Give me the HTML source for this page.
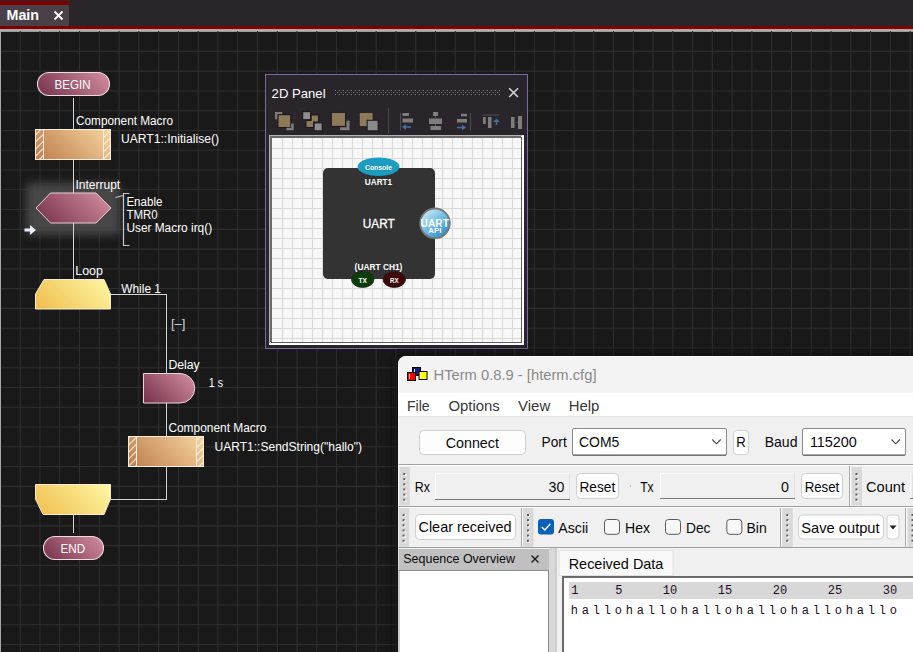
<!DOCTYPE html><html><head><meta charset="utf-8"><style>html,body{margin:0;padding:0;background:#191919;overflow:hidden;width:913px;height:652px}svg{display:block}</style></head><body>
<svg width="913" height="652" viewBox="0 0 913 652" shape-rendering="auto">
<defs>
<linearGradient id="gMar" x1="0" y1="1" x2="1" y2="0">
 <stop offset="0" stop-color="#7a3048"/><stop offset="1" stop-color="#d8a0b0"/></linearGradient>
<linearGradient id="gOr" x1="0" y1="1" x2="1" y2="0">
 <stop offset="0" stop-color="#c0804e"/><stop offset="1" stop-color="#f6d4a0"/></linearGradient>
<linearGradient id="gYe" x1="0" y1="1" x2="1" y2="0">
 <stop offset="0" stop-color="#f0c050"/><stop offset="1" stop-color="#fff8a8"/></linearGradient>
<linearGradient id="gApi" x1="0.1" y1="0.05" x2="0.85" y2="0.95">
 <stop offset="0" stop-color="#d4eef9"/><stop offset="0.45" stop-color="#7cc2e8"/><stop offset="1" stop-color="#2a8acb"/></linearGradient>
<filter id="blur8" x="-50%" y="-50%" width="200%" height="200%"><feGaussianBlur stdDeviation="7"/></filter>
<filter id="blur4" x="-30%" y="-30%" width="160%" height="160%"><feGaussianBlur stdDeviation="4"/></filter>
<filter id="blur3" x="-10%" y="-10%" width="120%" height="120%"><feGaussianBlur stdDeviation="3"/></filter>
<pattern id="hatch" width="5" height="5" patternUnits="userSpaceOnUse" patternTransform="rotate(45)">
 <line x1="0.6" y1="0" x2="0.6" y2="5" stroke="#fff6ea" stroke-width="1.0"/></pattern>
</defs>
<rect x="0" y="0" width="913" height="26" fill="#2a252b"/>
<rect x="0" y="1" width="69" height="4" fill="#800000"/>
<rect x="0" y="5" width="69" height="21" fill="#4a4148"/>
<rect x="0" y="26" width="913" height="3" fill="#800000"/>
<rect x="0" y="29" width="913" height="2" fill="#a8aeb2"/>
<rect x="0" y="31" width="913" height="1" fill="#9e9d96"/>
<text x="6.5" y="20" font-size="14" fill="#fff" font-weight="bold" font-family='"Liberation Sans", sans-serif' text-anchor="start" textLength="32.5" lengthAdjust="spacingAndGlyphs" >Main</text>
<path d="M54.5 11.5 L62.5 19.5 M62.5 11.5 L54.5 19.5" stroke="#fff" stroke-width="1.8"/>
<rect x="1" y="32" width="912" height="620" fill="#191919"/>
<path d="M20.20 31V652 M39.98 31V652 M59.75 31V652 M79.53 31V652 M99.30 31V652 M119.08 31V652 M138.86 31V652 M158.63 31V652 M178.41 31V652 M198.18 31V652 M217.96 31V652 M237.74 31V652 M257.51 31V652 M277.29 31V652 M297.06 31V652 M316.84 31V652 M336.62 31V652 M356.39 31V652 M376.17 31V652 M395.94 31V652 M415.72 31V652 M435.50 31V652 M455.27 31V652 M475.05 31V652 M494.82 31V652 M514.60 31V652 M534.38 31V652 M554.15 31V652 M573.93 31V652 M593.70 31V652 M613.48 31V652 M633.26 31V652 M653.03 31V652 M672.81 31V652 M692.58 31V652 M712.36 31V652 M732.14 31V652 M751.91 31V652 M771.69 31V652 M791.46 31V652 M811.24 31V652 M831.02 31V652 M850.79 31V652 M870.57 31V652 M890.34 31V652 M910.12 31V652 M1 51.40H913 M1 71.17H913 M1 90.94H913 M1 110.71H913 M1 130.48H913 M1 150.25H913 M1 170.02H913 M1 189.79H913 M1 209.56H913 M1 229.33H913 M1 249.10H913 M1 268.87H913 M1 288.64H913 M1 308.41H913 M1 328.18H913 M1 347.95H913 M1 367.72H913 M1 387.49H913 M1 407.26H913 M1 427.03H913 M1 446.80H913 M1 466.57H913 M1 486.34H913 M1 506.11H913 M1 525.88H913 M1 545.65H913 M1 565.42H913 M1 585.19H913 M1 604.96H913 M1 624.73H913 M1 644.50H913" stroke="#2e2e2e" stroke-width="1.1" fill="none"/>
<rect x="0" y="31" width="1" height="621" fill="#a8a8a0"/>
<rect x="26" y="183" width="94" height="52" rx="4" fill="#474747" filter="url(#blur4)"/>
<rect x="73" y="98" width="1" height="31" fill="#d4d4d4"/>
<rect x="73" y="159" width="1" height="34" fill="#d4d4d4"/>
<rect x="73" y="223" width="1" height="56" fill="#d4d4d4"/>
<rect x="111" y="294" width="56" height="1" fill="#d4d4d4"/>
<rect x="166" y="294" width="1" height="79" fill="#d4d4d4"/>
<rect x="166" y="403" width="1" height="33" fill="#d4d4d4"/>
<rect x="166" y="466" width="1" height="34" fill="#d4d4d4"/>
<rect x="111" y="499" width="56" height="1" fill="#d4d4d4"/>
<rect x="73" y="515" width="1" height="18" fill="#d4d4d4"/>
<defs><linearGradient id="g1" gradientUnits="userSpaceOnUse" x1="49.25" y1="108.25" x2="97.75" y2="59.75"><stop offset="0" stop-color="#74304a"/><stop offset="1" stop-color="#d690a2"/></linearGradient></defs>
<rect x="37.5" y="72.5" width="72" height="23" rx="11.5" fill="url(#g1)" stroke="#f0dde4" stroke-width="1.1"/>
<text x="54.5" y="89" font-size="12" fill="#fff" font-weight="normal" font-family='"Liberation Sans", sans-serif' text-anchor="start" textLength="36" lengthAdjust="spacingAndGlyphs" >BEGIN</text>
<defs><linearGradient id="g2" gradientUnits="userSpaceOnUse" x1="52.25" y1="569.25" x2="94.75" y2="526.75"><stop offset="0" stop-color="#74304a"/><stop offset="1" stop-color="#d690a2"/></linearGradient></defs>
<rect x="43.5" y="536.5" width="60" height="23" rx="11.5" fill="url(#g2)" stroke="#f0dde4" stroke-width="1.1"/>
<text x="60.5" y="553" font-size="12" fill="#fff" font-weight="normal" font-family='"Liberation Sans", sans-serif' text-anchor="start" textLength="24.6" lengthAdjust="spacingAndGlyphs" >END</text>
<defs><linearGradient id="g3" gradientUnits="userSpaceOnUse" x1="46.5" y1="170.5" x2="99.5" y2="117.5"><stop offset="0" stop-color="#bd7c4c"/><stop offset="1" stop-color="#f7d6a0"/></linearGradient></defs>
<rect x="35.5" y="129.5" width="75" height="30" fill="url(#g3)" stroke="#fbeee0" stroke-width="1"/>
<rect x="36" y="130" width="7.5" height="29" fill="url(#hatch)"/>
<rect x="103" y="130" width="7.5" height="29" fill="url(#hatch)"/>
<rect x="43" y="130" width="1" height="29" fill="#fbeee0"/>
<rect x="103" y="130" width="1" height="29" fill="#fbeee0"/>
<defs><linearGradient id="g4" gradientUnits="userSpaceOnUse" x1="139.5" y1="477.5" x2="192.5" y2="424.5"><stop offset="0" stop-color="#bd7c4c"/><stop offset="1" stop-color="#f7d6a0"/></linearGradient></defs>
<rect x="128.5" y="436.5" width="75" height="30" fill="url(#g4)" stroke="#fbeee0" stroke-width="1"/>
<rect x="129" y="437" width="7.5" height="29" fill="url(#hatch)"/>
<rect x="196" y="437" width="7.5" height="29" fill="url(#hatch)"/>
<rect x="136" y="437" width="1" height="29" fill="#fbeee0"/>
<rect x="196" y="437" width="1" height="29" fill="#fbeee0"/>
<defs><linearGradient id="g5" gradientUnits="userSpaceOnUse" x1="47.25" y1="234.25" x2="99.75" y2="181.75"><stop offset="0" stop-color="#74304a"/><stop offset="1" stop-color="#d690a2"/></linearGradient></defs>
<polygon points="36,208 50.5,193 96,193 111,208 96,223 50.5,223" fill="url(#g5)" stroke="#e8d0d8" stroke-width="1"/>
<path d="M24.5 228.5 H30 V225 L36 230 L30 235 V231.5 H24.5 Z" fill="#e8f0fa"/>
<path d="M129.5 193.5 H123.5 V245.5 H129.5 M115.5 197.5 L123 195.5" stroke="#c8c8c8" stroke-width="1.2" fill="none"/>
<defs><linearGradient id="g6" gradientUnits="userSpaceOnUse" x1="46.5" y1="320.5" x2="99.5" y2="267.5"><stop offset="0" stop-color="#efbd4c"/><stop offset="1" stop-color="#fff8a6"/></linearGradient></defs>
<polygon points="44,279.5 104,279.5 110.5,294 110.5,309 35.5,309 35.5,294" fill="url(#g6)" stroke="#f4ecd4" stroke-width="1"/>
<defs><linearGradient id="g7" gradientUnits="userSpaceOnUse" x1="46.25" y1="526.25" x2="99.75" y2="472.75"><stop offset="0" stop-color="#efbd4c"/><stop offset="1" stop-color="#fff8a6"/></linearGradient></defs>
<polygon points="35.5,484.5 110.5,484.5 110.5,499 104,514.5 43,514.5 35.5,499" fill="url(#g7)" stroke="#f4ecd4" stroke-width="1"/>
<defs><linearGradient id="g8" gradientUnits="userSpaceOnUse" x1="148.5" y1="408.5" x2="189.5" y2="367.5"><stop offset="0" stop-color="#74304a"/><stop offset="1" stop-color="#d690a2"/></linearGradient></defs>
<path d="M143.5 373.5 H180 A14.75 14.75 0 0 1 180 403 H143.5 Z" fill="url(#g8)" stroke="#ecd6de" stroke-width="1"/>
<text x="76" y="124.9" font-size="12" fill="#fff" font-weight="normal" font-family='"Liberation Sans", sans-serif' text-anchor="start" textLength="97" lengthAdjust="spacingAndGlyphs" >Component Macro</text>
<text x="121" y="143.2" font-size="12" fill="#fff" font-weight="normal" font-family='"Liberation Sans", sans-serif' text-anchor="start" textLength="98" lengthAdjust="spacingAndGlyphs" >UART1::Initialise()</text>
<text x="75.5" y="189" font-size="12" fill="#fff" font-weight="normal" font-family='"Liberation Sans", sans-serif' text-anchor="start" textLength="44.7" lengthAdjust="spacingAndGlyphs" >Interrupt</text>
<text x="126.4" y="205.6" font-size="12" fill="#fff" font-weight="normal" font-family='"Liberation Sans", sans-serif' text-anchor="start" textLength="36" lengthAdjust="spacingAndGlyphs" >Enable</text>
<text x="126.4" y="218.6" font-size="12" fill="#fff" font-weight="normal" font-family='"Liberation Sans", sans-serif' text-anchor="start" textLength="31.2" lengthAdjust="spacingAndGlyphs" >TMR0</text>
<text x="126.4" y="232.4" font-size="12" fill="#fff" font-weight="normal" font-family='"Liberation Sans", sans-serif' text-anchor="start" textLength="85.7" lengthAdjust="spacingAndGlyphs" >User Macro irq()</text>
<text x="75.3" y="275.4" font-size="12" fill="#fff" font-weight="normal" font-family='"Liberation Sans", sans-serif' text-anchor="start" textLength="27.6" lengthAdjust="spacingAndGlyphs" >Loop</text>
<text x="121.2" y="293" font-size="12" fill="#fff" font-weight="normal" font-family='"Liberation Sans", sans-serif' text-anchor="start" textLength="39.8" lengthAdjust="spacingAndGlyphs" >While 1</text>
<text x="171" y="327.8" font-size="13" fill="#d0d0d0" font-weight="normal" font-family='"Liberation Sans", sans-serif' text-anchor="start" textLength="14.5" lengthAdjust="spacingAndGlyphs" >[–]</text>
<text x="168.4" y="369" font-size="12" fill="#fff" font-weight="normal" font-family='"Liberation Sans", sans-serif' text-anchor="start" textLength="31.3" lengthAdjust="spacingAndGlyphs" >Delay</text>
<text x="208.8" y="387" font-size="12" fill="#fff" font-weight="normal" font-family='"Liberation Sans", sans-serif' text-anchor="start" textLength="14.2" lengthAdjust="spacingAndGlyphs" >1 s</text>
<text x="168.4" y="432" font-size="12" fill="#fff" font-weight="normal" font-family='"Liberation Sans", sans-serif' text-anchor="start" textLength="98" lengthAdjust="spacingAndGlyphs" >Component Macro</text>
<text x="214.5" y="451" font-size="12" fill="#fff" font-weight="normal" font-family='"Liberation Sans", sans-serif' text-anchor="start" textLength="147.5" lengthAdjust="spacingAndGlyphs" >UART1::SendString("hallo")</text>
<rect x="265.5" y="74.5" width="262" height="274" fill="#2a252a" stroke="#7b69a6" stroke-width="1"/>
<text x="271.6" y="98" font-size="13" fill="#fff" font-weight="normal" font-family='"Liberation Sans", sans-serif' text-anchor="start" textLength="54" lengthAdjust="spacingAndGlyphs" >2D Panel</text>
<path d="M335 90h1v1h-1z M335 94h1v1h-1z M337 92h1v1h-1z M339 90h1v1h-1z M339 94h1v1h-1z M341 92h1v1h-1z M343 90h1v1h-1z M343 94h1v1h-1z M345 92h1v1h-1z M347 90h1v1h-1z M347 94h1v1h-1z M349 92h1v1h-1z M351 90h1v1h-1z M351 94h1v1h-1z M353 92h1v1h-1z M355 90h1v1h-1z M355 94h1v1h-1z M357 92h1v1h-1z M359 90h1v1h-1z M359 94h1v1h-1z M361 92h1v1h-1z M363 90h1v1h-1z M363 94h1v1h-1z M365 92h1v1h-1z M367 90h1v1h-1z M367 94h1v1h-1z M369 92h1v1h-1z M371 90h1v1h-1z M371 94h1v1h-1z M373 92h1v1h-1z M375 90h1v1h-1z M375 94h1v1h-1z M377 92h1v1h-1z M379 90h1v1h-1z M379 94h1v1h-1z M381 92h1v1h-1z M383 90h1v1h-1z M383 94h1v1h-1z M385 92h1v1h-1z M387 90h1v1h-1z M387 94h1v1h-1z M389 92h1v1h-1z M391 90h1v1h-1z M391 94h1v1h-1z M393 92h1v1h-1z M395 90h1v1h-1z M395 94h1v1h-1z M397 92h1v1h-1z M399 90h1v1h-1z M399 94h1v1h-1z M401 92h1v1h-1z M403 90h1v1h-1z M403 94h1v1h-1z M405 92h1v1h-1z M407 90h1v1h-1z M407 94h1v1h-1z M409 92h1v1h-1z M411 90h1v1h-1z M411 94h1v1h-1z M413 92h1v1h-1z M415 90h1v1h-1z M415 94h1v1h-1z M417 92h1v1h-1z M419 90h1v1h-1z M419 94h1v1h-1z M421 92h1v1h-1z M423 90h1v1h-1z M423 94h1v1h-1z M425 92h1v1h-1z M427 90h1v1h-1z M427 94h1v1h-1z M429 92h1v1h-1z M431 90h1v1h-1z M431 94h1v1h-1z M433 92h1v1h-1z M435 90h1v1h-1z M435 94h1v1h-1z M437 92h1v1h-1z M439 90h1v1h-1z M439 94h1v1h-1z M441 92h1v1h-1z M443 90h1v1h-1z M443 94h1v1h-1z M445 92h1v1h-1z M447 90h1v1h-1z M447 94h1v1h-1z M449 92h1v1h-1z M451 90h1v1h-1z M451 94h1v1h-1z M453 92h1v1h-1z M455 90h1v1h-1z M455 94h1v1h-1z M457 92h1v1h-1z M459 90h1v1h-1z M459 94h1v1h-1z M461 92h1v1h-1z M463 90h1v1h-1z M463 94h1v1h-1z M465 92h1v1h-1z M467 90h1v1h-1z M467 94h1v1h-1z M469 92h1v1h-1z M471 90h1v1h-1z M471 94h1v1h-1z M473 92h1v1h-1z M475 90h1v1h-1z M475 94h1v1h-1z M477 92h1v1h-1z M479 90h1v1h-1z M479 94h1v1h-1z M481 92h1v1h-1z M483 90h1v1h-1z M483 94h1v1h-1z M485 92h1v1h-1z M487 90h1v1h-1z M487 94h1v1h-1z M489 92h1v1h-1z M491 90h1v1h-1z M491 94h1v1h-1z M493 92h1v1h-1z M495 90h1v1h-1z M495 94h1v1h-1z M497 92h1v1h-1z M499 90h1v1h-1z M499 94h1v1h-1z" fill="#8e8e8e"/>
<path d="M509.2 88.2 L518 97 M518 88.2 L509.2 97" stroke="#d4d4d4" stroke-width="1.6"/>
<path d="M275 112h7.2v2.6h-4.6v4.6h-2.6z" fill="#7c7c7c"/>
<rect x="277.5" y="114.2" width="13.7" height="13.8" fill="#1c181c"/>
<rect x="278.5" y="115.2" width="11.7" height="11.8" fill="#8c7a58"/>
<path d="M291.1 123.4h2.6v6.9h-7.3v-2.6h4.7z" fill="#7c7c7c"/>
<rect x="302.2" y="111.2" width="8.8" height="8.9" fill="#1c181c"/>
<rect x="303.2" y="112.2" width="6.8" height="6.9" fill="#8e8e8e"/>
<path d="M310.7 114.5h8.3v8h-5v5.5h-8.5v-8h5.2z" fill="#1c181c"/>
<path d="M311.7 115.5h6.3v6h-5v5.5h-6.5v-6h5.2z" fill="#8c7a58"/>
<rect x="313.7" y="122.4" width="8.9" height="8.9" fill="#1c181c"/>
<rect x="314.7" y="123.4" width="6.9" height="6.9" fill="#8e8e8e"/>
<path d="M294.5 112v7" stroke="#3c383d" stroke-width="1" stroke-dasharray="1 1"/>
<rect x="330.9" y="111.9" width="15.1" height="15" fill="#1c181c"/>
<rect x="331.9" y="112.9" width="13.1" height="13" fill="#8c7a58"/>
<path d="M346.5 120.8h3.1v9.5h-9.5v-3.1h6.4z" fill="#7c7c7c"/>
<path d="M359.8 113h12.8v7.8h-5v5.2h-7.8z" fill="#8c7a58"/>
<rect x="366.7" y="119.8" width="11.9" height="11.5" fill="#1c181c"/>
<rect x="367.7" y="120.8" width="9.9" height="9.5" fill="#8a8a8a"/>
<rect x="388" y="108" width="1" height="26" fill="#4a4a4a"/>
<rect x="400" y="113" width="1" height="17.5" fill="#4e4e4e"/>
<rect x="402.5" y="113" width="6.5" height="3" fill="#7e7e7e"/>
<rect x="402.5" y="118.5" width="10.5" height="4" fill="#7e7e7e"/>
<path d="M402 127 L406 124 V126.3 H411 V127.7 H406 V130 Z" fill="#41709f"/>
<rect x="433" y="112" width="5" height="4" fill="#7e7e7e"/>
<rect x="429" y="118.5" width="13" height="5.5" fill="#7e7e7e"/>
<rect x="430.5" y="126" width="10.5" height="4" fill="#7e7e7e"/>
<rect x="435" y="116" width="1" height="2.5" fill="#5a5a5a"/>
<rect x="435" y="124" width="1" height="2" fill="#5a5a5a"/>
<rect x="461" y="113.8" width="6" height="2.5" fill="#7e7e7e"/>
<rect x="457" y="119" width="10" height="3.5" fill="#7e7e7e"/>
<rect x="470" y="113" width="1" height="17" fill="#4e4e4e"/>
<path d="M466 127.5 L462 124.5 V126.8 H457 V128.2 H462 V130.5 Z" fill="#41709f"/>
<rect x="482" y="114.5" width="17.5" height="1" fill="#4e4e4e"/>
<rect x="483" y="117" width="2.7" height="7" fill="#7e7e7e"/>
<rect x="488" y="117" width="3.5" height="11" fill="#7e7e7e"/>
<path d="M496.5 118.5 L500 122 H497.3 V125 H495.7 V122 H493 Z" fill="#41709f"/>
<rect x="511" y="117" width="3.5" height="11" fill="#7e7e7e"/>
<rect x="518" y="116" width="4" height="13" fill="#7e7e7e"/>
<rect x="514.5" y="122" width="3.5" height="1" fill="#444"/>
<rect x="269" y="135" width="255" height="210" fill="#ffffff"/>
<rect x="269" y="135" width="253" height="1" fill="#b4b4b4"/>
<rect x="269" y="135" width="1" height="208" fill="#b4b4b4"/>
<rect x="270" y="136" width="251" height="2" fill="#6a6a6a"/>
<rect x="270" y="136" width="2" height="206" fill="#6a6a6a"/>
<rect x="272" y="138" width="249" height="204" fill="#f7f7f7"/>
<rect x="521" y="137" width="1" height="206" fill="#606060"/>
<rect x="271" y="342" width="251" height="1" fill="#606060"/>
<path d="M282.5 138V342 M292.5 138V342 M302.5 138V342 M312.5 138V342 M322.5 138V342 M332.5 138V342 M342.5 138V342 M352.5 138V342 M362.5 138V342 M372.5 138V342 M382.5 138V342 M392.5 138V342 M402.5 138V342 M412.5 138V342 M422.5 138V342 M432.5 138V342 M442.5 138V342 M452.5 138V342 M462.5 138V342 M472.5 138V342 M482.5 138V342 M492.5 138V342 M502.5 138V342 M512.5 138V342 M272 148.5H521 M272 158.5H521 M272 168.5H521 M272 178.5H521 M272 188.5H521 M272 198.5H521 M272 208.5H521 M272 218.5H521 M272 228.5H521 M272 238.5H521 M272 248.5H521 M272 258.5H521 M272 268.5H521 M272 278.5H521 M272 288.5H521 M272 298.5H521 M272 308.5H521 M272 318.5H521 M272 328.5H521 M272 338.5H521" stroke="#d9d9d9" stroke-width="1.1" fill="none"/>
<rect x="323" y="168" width="112" height="111" rx="5" fill="#333333"/>
<ellipse cx="378.5" cy="166.8" rx="21" ry="9.2" fill="#1b9cc0"/>
<text x="378.5" y="170.3" font-size="8" fill="#fff" font-weight="bold" font-family='"Liberation Sans", sans-serif' text-anchor="middle" textLength="27" lengthAdjust="spacingAndGlyphs" >Console</text>
<text x="378.5" y="185.2" font-size="9" fill="#fff" font-weight="bold" font-family='"Liberation Sans", sans-serif' text-anchor="middle" textLength="27.3" lengthAdjust="spacingAndGlyphs" >UART1</text>
<text x="378.7" y="228.3" font-size="12.5" fill="#fff" font-weight="normal" font-family='"Liberation Sans", sans-serif' text-anchor="middle" textLength="31.9" lengthAdjust="spacingAndGlyphs" stroke="#ffffff" stroke-width="0.3">UART</text>
<circle cx="435" cy="223.3" r="14.8" fill="url(#gApi)" stroke="#777777" stroke-width="1.8"/>
<text x="434.8" y="226.8" font-size="10" fill="#fff" font-weight="bold" font-family='"Liberation Sans", sans-serif' text-anchor="middle" textLength="28.5" lengthAdjust="spacingAndGlyphs" >UART</text>
<text x="434.8" y="233" font-size="7" fill="#fff" font-weight="bold" font-family='"Liberation Sans", sans-serif' text-anchor="middle" textLength="13" lengthAdjust="spacingAndGlyphs" >API</text>
<text x="378.5" y="269.9" font-size="9" fill="#fff" font-weight="bold" font-family='"Liberation Sans", sans-serif' text-anchor="middle" textLength="47.8" lengthAdjust="spacingAndGlyphs" >(UART CH1)</text>
<ellipse cx="362.7" cy="279.5" rx="11.2" ry="8" fill="#0a3c0a" stroke="#1e2a1e" stroke-width="0.8"/>
<ellipse cx="394.3" cy="279.5" rx="11.2" ry="8" fill="#3c0909" stroke="#2a1e1e" stroke-width="0.8"/>
<text x="362.7" y="283" font-size="7" fill="#fff" font-weight="bold" font-family='"Liberation Sans", sans-serif' text-anchor="middle" textLength="8.5" lengthAdjust="spacingAndGlyphs" >TX</text>
<text x="394.3" y="283" font-size="7" fill="#fff" font-weight="bold" font-family='"Liberation Sans", sans-serif' text-anchor="middle" textLength="8.5" lengthAdjust="spacingAndGlyphs" >RX</text>
<rect x="392" y="350" width="540" height="320" rx="12" fill="#101010" opacity="0.5" filter="url(#blur3)"/>
<path d="M398 652 V364 A8 8 0 0 1 406 356 H913 V652 Z" fill="#f3f3f3"/>
<path d="M398.5 652 V364 A7.5 7.5 0 0 1 406 356.5 H913" stroke="#fdfdfd" stroke-width="1" fill="none"/>
<rect x="398.5" y="392.8" width="514.5" height="23.2" fill="#ffffff"/>
<rect x="398.5" y="416" width="514.5" height="1.5" fill="#e6e6e6"/>
<rect x="398.5" y="417.5" width="514.5" height="47" fill="#f0f0f0"/>
<rect x="412.5" y="367.5" width="8" height="8" fill="#1c1c86" stroke="#000" stroke-width="1"/>
<rect x="414" y="369" width="1" height="5" fill="#fff" opacity="0.85"/>
<rect x="407.5" y="372.5" width="8" height="8" fill="#ff0000" stroke="#000" stroke-width="1"/>
<rect x="409" y="374" width="1" height="5" fill="#fff" opacity="0.85"/>
<rect x="419.0" y="371.5" width="8" height="8" fill="#ffff00" stroke="#000" stroke-width="1"/>
<rect x="420.5" y="373" width="1" height="5" fill="#fff" opacity="0.85"/>
<text x="433.5" y="379.6" font-size="14" fill="#8a8a8a" font-weight="normal" font-family='"Liberation Sans", sans-serif' text-anchor="start" textLength="163" lengthAdjust="spacingAndGlyphs" >HTerm 0.8.9 - [hterm.cfg]</text>
<text x="407" y="410.8" font-size="14" fill="#383838" font-weight="normal" font-family='"Liberation Sans", sans-serif' text-anchor="start" textLength="22.7" lengthAdjust="spacingAndGlyphs" >File</text>
<text x="448.5" y="410.8" font-size="14" fill="#383838" font-weight="normal" font-family='"Liberation Sans", sans-serif' text-anchor="start" textLength="51.3" lengthAdjust="spacingAndGlyphs" >Options</text>
<text x="518" y="410.8" font-size="14" fill="#383838" font-weight="normal" font-family='"Liberation Sans", sans-serif' text-anchor="start" textLength="32.2" lengthAdjust="spacingAndGlyphs" >View</text>
<text x="568.7" y="410.8" font-size="14" fill="#383838" font-weight="normal" font-family='"Liberation Sans", sans-serif' text-anchor="start" textLength="30.7" lengthAdjust="spacingAndGlyphs" >Help</text>
<rect x="419.5" y="430.5" width="106" height="24" rx="4" fill="#fdfdfd" stroke="#d0d0d0" stroke-width="1"/>
<text x="445.7" y="448.3" font-size="14" fill="#0a0a0a" font-weight="normal" font-family='"Liberation Sans", sans-serif' text-anchor="start" textLength="53.2" lengthAdjust="spacingAndGlyphs" >Connect</text>
<text x="541.6" y="446.9" font-size="15" fill="#0a0a0a" font-weight="normal" font-family='"Liberation Sans", sans-serif' text-anchor="start" textLength="25.1" lengthAdjust="spacingAndGlyphs" >Port</text>
<rect x="572.5" y="428.5" width="154" height="27" rx="1.5" fill="#ffffff" stroke="#8a8a8a" stroke-width="1"/>
<rect x="573" y="454.5" width="153" height="1" fill="#5a5a5a"/>
<text x="579" y="446.9" font-size="15" fill="#0a0a0a" font-weight="normal" font-family='"Liberation Sans", sans-serif' text-anchor="start" textLength="40.3" lengthAdjust="spacingAndGlyphs" >COM5</text>
<path d="M712.3 439.5 L716.5 443.8 L720.7 439.5" stroke="#404040" stroke-width="1.1" fill="none"/>
<rect x="733.5" y="430.5" width="15" height="24" rx="3" fill="#fdfdfd" stroke="#d0d0d0" stroke-width="1"/>
<text x="741" y="447" font-size="15" fill="#0a0a0a" font-weight="normal" font-family='"Liberation Sans", sans-serif' text-anchor="middle" textLength="9.5" lengthAdjust="spacingAndGlyphs" >R</text>
<text x="764.7" y="446.9" font-size="15" fill="#0a0a0a" font-weight="normal" font-family='"Liberation Sans", sans-serif' text-anchor="start" textLength="32.8" lengthAdjust="spacingAndGlyphs" >Baud</text>
<rect x="802.5" y="428.5" width="103" height="27" rx="1.5" fill="#ffffff" stroke="#8a8a8a" stroke-width="1"/>
<rect x="803" y="454.5" width="102" height="1" fill="#5a5a5a"/>
<text x="809.9" y="446.9" font-size="15" fill="#0a0a0a" font-weight="normal" font-family='"Liberation Sans", sans-serif' text-anchor="start" textLength="47" lengthAdjust="spacingAndGlyphs" >115200</text>
<path d="M891.5 439.5 L895.7 443.8 L899.9 439.5" stroke="#404040" stroke-width="1.1" fill="none"/>
<rect x="398.5" y="464" width="514.5" height="1" fill="#a0a0a0"/>
<rect x="398.5" y="465" width="514.5" height="1" fill="#ffffff"/>
<rect x="398.5" y="466" width="514.5" height="40" fill="#f0f0f0"/>
<rect x="399.3" y="467" width="10.5" height="38.5" fill="#d9d9d9"/>
<rect x="403.3" y="473" width="2" height="2" fill="#5a5a5a"/>
<rect x="404.3" y="475" width="2" height="1" fill="#ffffff"/>
<rect x="405.3" y="474" width="1" height="1" fill="#ffffff"/>
<rect x="403.3" y="478.15" width="2" height="2" fill="#5a5a5a"/>
<rect x="404.3" y="480.15" width="2" height="1" fill="#ffffff"/>
<rect x="405.3" y="479.15" width="1" height="1" fill="#ffffff"/>
<rect x="403.3" y="483.29999999999995" width="2" height="2" fill="#5a5a5a"/>
<rect x="404.3" y="485.29999999999995" width="2" height="1" fill="#ffffff"/>
<rect x="405.3" y="484.29999999999995" width="1" height="1" fill="#ffffff"/>
<rect x="403.3" y="488.44999999999993" width="2" height="2" fill="#5a5a5a"/>
<rect x="404.3" y="490.44999999999993" width="2" height="1" fill="#ffffff"/>
<rect x="405.3" y="489.44999999999993" width="1" height="1" fill="#ffffff"/>
<rect x="403.3" y="493.5999999999999" width="2" height="2" fill="#5a5a5a"/>
<rect x="404.3" y="495.5999999999999" width="2" height="1" fill="#ffffff"/>
<rect x="405.3" y="494.5999999999999" width="1" height="1" fill="#ffffff"/>
<rect x="403.3" y="498.7499999999999" width="2" height="2" fill="#5a5a5a"/>
<rect x="404.3" y="500.7499999999999" width="2" height="1" fill="#ffffff"/>
<rect x="405.3" y="499.7499999999999" width="1" height="1" fill="#ffffff"/>
<text x="414.8" y="491.9" font-size="15" fill="#0a0a0a" font-weight="normal" font-family='"Liberation Sans", sans-serif' text-anchor="start" textLength="15.2" lengthAdjust="spacingAndGlyphs" >Rx</text>
<rect x="435" y="473" width="135" height="27" fill="#f0f0f0"/>
<rect x="435" y="473" width="135" height="1" fill="#fbfbfb"/>
<rect x="435" y="473" width="1" height="27" fill="#fbfbfb"/>
<rect x="569" y="473" width="1" height="27" fill="#e2e2e2"/>
<rect x="435" y="499" width="135" height="1" fill="#7a7a7a"/>
<text x="548.5" y="491.9" font-size="15" fill="#0a0a0a" font-weight="normal" font-family='"Liberation Sans", sans-serif' text-anchor="start" textLength="15.8" lengthAdjust="spacingAndGlyphs" >30</text>
<rect x="576.5" y="473.5" width="42" height="25" rx="4" fill="#fdfdfd" stroke="#d0d0d0" stroke-width="1"/>
<text x="579.4" y="491.9" font-size="15" fill="#0a0a0a" font-weight="normal" font-family='"Liberation Sans", sans-serif' text-anchor="start" textLength="35.8" lengthAdjust="spacingAndGlyphs" >Reset</text>
<rect x="630" y="485.5" width="1" height="1" fill="#909090"/>
<text x="640.2" y="491.9" font-size="15" fill="#0a0a0a" font-weight="normal" font-family='"Liberation Sans", sans-serif' text-anchor="start" textLength="13.5" lengthAdjust="spacingAndGlyphs" >Tx</text>
<rect x="660" y="473" width="135" height="26" fill="#f0f0f0"/>
<rect x="660" y="473" width="135" height="1" fill="#fbfbfb"/>
<rect x="660" y="473" width="1" height="26" fill="#fbfbfb"/>
<rect x="794" y="473" width="1" height="26" fill="#e2e2e2"/>
<rect x="660" y="498" width="135" height="1" fill="#7a7a7a"/>
<text x="781" y="491.9" font-size="15" fill="#0a0a0a" font-weight="normal" font-family='"Liberation Sans", sans-serif' text-anchor="start" textLength="7.9" lengthAdjust="spacingAndGlyphs" >0</text>
<rect x="801.5" y="473.5" width="41" height="25" rx="4" fill="#fdfdfd" stroke="#d0d0d0" stroke-width="1"/>
<text x="804.7" y="491.9" font-size="15" fill="#0a0a0a" font-weight="normal" font-family='"Liberation Sans", sans-serif' text-anchor="start" textLength="34.6" lengthAdjust="spacingAndGlyphs" >Reset</text>
<rect x="849" y="466" width="1" height="40" fill="#a8a8a8"/>
<rect x="850" y="466" width="1" height="40" fill="#ffffff"/>
<rect x="851.5" y="467" width="10.5" height="38.5" fill="#d9d9d9"/>
<rect x="855.5" y="473" width="2" height="2" fill="#5a5a5a"/>
<rect x="856.5" y="475" width="2" height="1" fill="#ffffff"/>
<rect x="857.5" y="474" width="1" height="1" fill="#ffffff"/>
<rect x="855.5" y="478.15" width="2" height="2" fill="#5a5a5a"/>
<rect x="856.5" y="480.15" width="2" height="1" fill="#ffffff"/>
<rect x="857.5" y="479.15" width="1" height="1" fill="#ffffff"/>
<rect x="855.5" y="483.29999999999995" width="2" height="2" fill="#5a5a5a"/>
<rect x="856.5" y="485.29999999999995" width="2" height="1" fill="#ffffff"/>
<rect x="857.5" y="484.29999999999995" width="1" height="1" fill="#ffffff"/>
<rect x="855.5" y="488.44999999999993" width="2" height="2" fill="#5a5a5a"/>
<rect x="856.5" y="490.44999999999993" width="2" height="1" fill="#ffffff"/>
<rect x="857.5" y="489.44999999999993" width="1" height="1" fill="#ffffff"/>
<rect x="855.5" y="493.5999999999999" width="2" height="2" fill="#5a5a5a"/>
<rect x="856.5" y="495.5999999999999" width="2" height="1" fill="#ffffff"/>
<rect x="857.5" y="494.5999999999999" width="1" height="1" fill="#ffffff"/>
<rect x="855.5" y="498.7499999999999" width="2" height="2" fill="#5a5a5a"/>
<rect x="856.5" y="500.7499999999999" width="2" height="1" fill="#ffffff"/>
<rect x="857.5" y="499.7499999999999" width="1" height="1" fill="#ffffff"/>
<text x="866" y="491.9" font-size="15" fill="#0a0a0a" font-weight="normal" font-family='"Liberation Sans", sans-serif' text-anchor="start" textLength="39" lengthAdjust="spacingAndGlyphs" >Count</text>
<rect x="910" y="473" width="3" height="26" fill="#f0f0f0"/>
<rect x="910" y="473" width="3" height="1" fill="#fbfbfb"/>
<rect x="910" y="473" width="1" height="26" fill="#fbfbfb"/>
<rect x="912" y="473" width="1" height="26" fill="#e2e2e2"/>
<rect x="910" y="498" width="3" height="1" fill="#7a7a7a"/>
<rect x="398.5" y="506" width="514.5" height="1" fill="#a0a0a0"/>
<rect x="398.5" y="507" width="514.5" height="1" fill="#ffffff"/>
<rect x="398.5" y="508" width="514.5" height="39" fill="#f0f0f0"/>
<rect x="398.6" y="508" width="10.5" height="39" fill="#d9d9d9"/>
<rect x="402.6" y="514" width="2" height="2" fill="#5a5a5a"/>
<rect x="403.6" y="516" width="2" height="1" fill="#ffffff"/>
<rect x="404.6" y="515" width="1" height="1" fill="#ffffff"/>
<rect x="402.6" y="519.15" width="2" height="2" fill="#5a5a5a"/>
<rect x="403.6" y="521.15" width="2" height="1" fill="#ffffff"/>
<rect x="404.6" y="520.15" width="1" height="1" fill="#ffffff"/>
<rect x="402.6" y="524.3" width="2" height="2" fill="#5a5a5a"/>
<rect x="403.6" y="526.3" width="2" height="1" fill="#ffffff"/>
<rect x="404.6" y="525.3" width="1" height="1" fill="#ffffff"/>
<rect x="402.6" y="529.4499999999999" width="2" height="2" fill="#5a5a5a"/>
<rect x="403.6" y="531.4499999999999" width="2" height="1" fill="#ffffff"/>
<rect x="404.6" y="530.4499999999999" width="1" height="1" fill="#ffffff"/>
<rect x="402.6" y="534.5999999999999" width="2" height="2" fill="#5a5a5a"/>
<rect x="403.6" y="536.5999999999999" width="2" height="1" fill="#ffffff"/>
<rect x="404.6" y="535.5999999999999" width="1" height="1" fill="#ffffff"/>
<rect x="402.6" y="539.7499999999999" width="2" height="2" fill="#5a5a5a"/>
<rect x="403.6" y="541.7499999999999" width="2" height="1" fill="#ffffff"/>
<rect x="404.6" y="540.7499999999999" width="1" height="1" fill="#ffffff"/>
<rect x="415.5" y="514.5" width="100" height="25" rx="4" fill="#fdfdfd" stroke="#d0d0d0" stroke-width="1"/>
<text x="418.5" y="532.4" font-size="15" fill="#0a0a0a" font-weight="normal" font-family='"Liberation Sans", sans-serif' text-anchor="start" textLength="93" lengthAdjust="spacingAndGlyphs" >Clear received</text>
<rect x="521" y="508" width="1" height="39" fill="#a8a8a8"/>
<rect x="522" y="508" width="1" height="39" fill="#ffffff"/>
<rect x="523" y="508" width="10.5" height="39" fill="#d9d9d9"/>
<rect x="527" y="514" width="2" height="2" fill="#5a5a5a"/>
<rect x="528" y="516" width="2" height="1" fill="#ffffff"/>
<rect x="529" y="515" width="1" height="1" fill="#ffffff"/>
<rect x="527" y="519.15" width="2" height="2" fill="#5a5a5a"/>
<rect x="528" y="521.15" width="2" height="1" fill="#ffffff"/>
<rect x="529" y="520.15" width="1" height="1" fill="#ffffff"/>
<rect x="527" y="524.3" width="2" height="2" fill="#5a5a5a"/>
<rect x="528" y="526.3" width="2" height="1" fill="#ffffff"/>
<rect x="529" y="525.3" width="1" height="1" fill="#ffffff"/>
<rect x="527" y="529.4499999999999" width="2" height="2" fill="#5a5a5a"/>
<rect x="528" y="531.4499999999999" width="2" height="1" fill="#ffffff"/>
<rect x="529" y="530.4499999999999" width="1" height="1" fill="#ffffff"/>
<rect x="527" y="534.5999999999999" width="2" height="2" fill="#5a5a5a"/>
<rect x="528" y="536.5999999999999" width="2" height="1" fill="#ffffff"/>
<rect x="529" y="535.5999999999999" width="1" height="1" fill="#ffffff"/>
<rect x="527" y="539.7499999999999" width="2" height="2" fill="#5a5a5a"/>
<rect x="528" y="541.7499999999999" width="2" height="1" fill="#ffffff"/>
<rect x="529" y="540.7499999999999" width="1" height="1" fill="#ffffff"/>
<rect x="538" y="519" width="16" height="15.5" rx="3" fill="#0a5fbf"/>
<path d="M541.8 527 L544.8 530 L550.4 523.8" stroke="#ffffff" stroke-width="1.3" fill="none"/>
<text x="558.3" y="533" font-size="15" fill="#0a0a0a" font-weight="normal" font-family='"Liberation Sans", sans-serif' text-anchor="start" textLength="29.9" lengthAdjust="spacingAndGlyphs" >Ascii</text>
<rect x="604.5" y="519.5" width="15" height="14.8" rx="3" fill="#f8f8f8" stroke="#585858" stroke-width="1"/>
<text x="625" y="533" font-size="15" fill="#0a0a0a" font-weight="normal" font-family='"Liberation Sans", sans-serif' text-anchor="start" textLength="25" lengthAdjust="spacingAndGlyphs" >Hex</text>
<rect x="665.5" y="519.5" width="15" height="14.8" rx="3" fill="#f8f8f8" stroke="#585858" stroke-width="1"/>
<text x="686" y="533" font-size="15" fill="#0a0a0a" font-weight="normal" font-family='"Liberation Sans", sans-serif' text-anchor="start" textLength="24.5" lengthAdjust="spacingAndGlyphs" >Dec</text>
<rect x="726.8" y="519.5" width="15" height="14.8" rx="3" fill="#f8f8f8" stroke="#585858" stroke-width="1"/>
<text x="746.5" y="533" font-size="15" fill="#0a0a0a" font-weight="normal" font-family='"Liberation Sans", sans-serif' text-anchor="start" textLength="20.2" lengthAdjust="spacingAndGlyphs" >Bin</text>
<rect x="780" y="508" width="1" height="39" fill="#a8a8a8"/>
<rect x="781" y="508" width="1" height="39" fill="#ffffff"/>
<rect x="782.3" y="508" width="10.5" height="39" fill="#d9d9d9"/>
<rect x="786.3" y="514" width="2" height="2" fill="#5a5a5a"/>
<rect x="787.3" y="516" width="2" height="1" fill="#ffffff"/>
<rect x="788.3" y="515" width="1" height="1" fill="#ffffff"/>
<rect x="786.3" y="519.15" width="2" height="2" fill="#5a5a5a"/>
<rect x="787.3" y="521.15" width="2" height="1" fill="#ffffff"/>
<rect x="788.3" y="520.15" width="1" height="1" fill="#ffffff"/>
<rect x="786.3" y="524.3" width="2" height="2" fill="#5a5a5a"/>
<rect x="787.3" y="526.3" width="2" height="1" fill="#ffffff"/>
<rect x="788.3" y="525.3" width="1" height="1" fill="#ffffff"/>
<rect x="786.3" y="529.4499999999999" width="2" height="2" fill="#5a5a5a"/>
<rect x="787.3" y="531.4499999999999" width="2" height="1" fill="#ffffff"/>
<rect x="788.3" y="530.4499999999999" width="1" height="1" fill="#ffffff"/>
<rect x="786.3" y="534.5999999999999" width="2" height="2" fill="#5a5a5a"/>
<rect x="787.3" y="536.5999999999999" width="2" height="1" fill="#ffffff"/>
<rect x="788.3" y="535.5999999999999" width="1" height="1" fill="#ffffff"/>
<rect x="786.3" y="539.7499999999999" width="2" height="2" fill="#5a5a5a"/>
<rect x="787.3" y="541.7499999999999" width="2" height="1" fill="#ffffff"/>
<rect x="788.3" y="540.7499999999999" width="1" height="1" fill="#ffffff"/>
<rect x="798.5" y="515.0" width="85" height="24.0" rx="4" fill="#fdfdfd" stroke="#d0d0d0" stroke-width="1"/>
<text x="801.3" y="533" font-size="15" fill="#0a0a0a" font-weight="normal" font-family='"Liberation Sans", sans-serif' text-anchor="start" textLength="78.3" lengthAdjust="spacingAndGlyphs" >Save output</text>
<rect x="887.0" y="515.0" width="12.0" height="24.0" rx="3" fill="#fdfdfd" stroke="#d0d0d0" stroke-width="1"/>
<path d="M889.5 525.5 H896.5 L893 529.5 Z" fill="#202020"/>
<rect x="905" y="508" width="1" height="39" fill="#a8a8a8"/>
<rect x="906" y="508" width="1" height="39" fill="#ffffff"/>
<rect x="907.5" y="508" width="10.5" height="39" fill="#d9d9d9"/>
<rect x="911.5" y="514" width="2" height="2" fill="#5a5a5a"/>
<rect x="912.5" y="516" width="2" height="1" fill="#ffffff"/>
<rect x="913.5" y="515" width="1" height="1" fill="#ffffff"/>
<rect x="911.5" y="519.15" width="2" height="2" fill="#5a5a5a"/>
<rect x="912.5" y="521.15" width="2" height="1" fill="#ffffff"/>
<rect x="913.5" y="520.15" width="1" height="1" fill="#ffffff"/>
<rect x="911.5" y="524.3" width="2" height="2" fill="#5a5a5a"/>
<rect x="912.5" y="526.3" width="2" height="1" fill="#ffffff"/>
<rect x="913.5" y="525.3" width="1" height="1" fill="#ffffff"/>
<rect x="911.5" y="529.4499999999999" width="2" height="2" fill="#5a5a5a"/>
<rect x="912.5" y="531.4499999999999" width="2" height="1" fill="#ffffff"/>
<rect x="913.5" y="530.4499999999999" width="1" height="1" fill="#ffffff"/>
<rect x="911.5" y="534.5999999999999" width="2" height="2" fill="#5a5a5a"/>
<rect x="912.5" y="536.5999999999999" width="2" height="1" fill="#ffffff"/>
<rect x="913.5" y="535.5999999999999" width="1" height="1" fill="#ffffff"/>
<rect x="911.5" y="539.7499999999999" width="2" height="2" fill="#5a5a5a"/>
<rect x="912.5" y="541.7499999999999" width="2" height="1" fill="#ffffff"/>
<rect x="913.5" y="540.7499999999999" width="1" height="1" fill="#ffffff"/>
<rect x="398.5" y="547" width="514.5" height="1" fill="#a0a0a0"/>
<rect x="398.5" y="548" width="514.5" height="104" fill="#f0f0f0"/>
<rect x="398.5" y="549" width="150.5" height="21" fill="#c0c0c0"/>
<text x="403.3" y="563.1" font-size="13.5" fill="#0a0a0a" font-weight="normal" font-family='"Liberation Sans", sans-serif' text-anchor="start" textLength="111.6" lengthAdjust="spacingAndGlyphs" >Sequence Overview</text>
<path d="M531.5 555.5 L538.5 562.5 M538.5 555.5 L531.5 562.5" stroke="#1a1a1a" stroke-width="1.4"/>
<rect x="398.5" y="570" width="150.5" height="82" fill="#ffffff"/>
<rect x="398.5" y="570" width="1" height="82" fill="#a0a0a0"/>
<rect x="548" y="570" width="1" height="82" fill="#8a8a8a"/>
<rect x="398.5" y="570" width="150.5" height="1" fill="#8a8a8a"/>
<rect x="549" y="548" width="6.5" height="104" fill="#d8d8d8"/>
<rect x="555.5" y="548" width="1" height="104" fill="#b0b0b0"/>
<rect x="559" y="550.5" width="114" height="25" fill="#f9f9f9" stroke="#e2e2e2" stroke-width="1"/>
<text x="568.7" y="569.1" font-size="14.5" fill="#0a0a0a" font-weight="normal" font-family='"Liberation Sans", sans-serif' text-anchor="start" textLength="94.7" lengthAdjust="spacingAndGlyphs" >Received Data</text>
<rect x="562" y="576" width="351" height="76" fill="#ffffff"/>
<rect x="562" y="576" width="351" height="2" fill="#6a6a6a"/>
<rect x="562" y="576" width="2" height="76" fill="#6a6a6a"/>
<rect x="569" y="582" width="344" height="17" fill="#d8d8d8"/>
<text x="571.2" y="593.8" font-size="12" fill="#1c0c24" font-weight="normal" font-family='"Liberation Mono", monospace' text-anchor="start" >1</text>
<text x="615.3" y="593.8" font-size="12" fill="#1c0c24" font-weight="normal" font-family='"Liberation Mono", monospace' text-anchor="start" >5</text>
<text x="662.7" y="593.8" font-size="12" fill="#1c0c24" font-weight="normal" font-family='"Liberation Mono", monospace' text-anchor="start" >10</text>
<text x="717.8" y="593.8" font-size="12" fill="#1c0c24" font-weight="normal" font-family='"Liberation Mono", monospace' text-anchor="start" >15</text>
<text x="772.7" y="593.8" font-size="12" fill="#1c0c24" font-weight="normal" font-family='"Liberation Mono", monospace' text-anchor="start" >20</text>
<text x="827.7" y="593.8" font-size="12" fill="#1c0c24" font-weight="normal" font-family='"Liberation Mono", monospace' text-anchor="start" >25</text>
<text x="882.8" y="593.8" font-size="12" fill="#1c0c24" font-weight="normal" font-family='"Liberation Mono", monospace' text-anchor="start" >30</text>
<text x="574.3" y="613.6" font-size="12" fill="#1c0c24" font-weight="normal" font-family='"Liberation Mono", monospace' text-anchor="middle" >h</text>
<text x="585.3" y="613.6" font-size="12" fill="#1c0c24" font-weight="normal" font-family='"Liberation Mono", monospace' text-anchor="middle" >a</text>
<text x="596.3" y="613.6" font-size="12" fill="#1c0c24" font-weight="normal" font-family='"Liberation Mono", monospace' text-anchor="middle" >l</text>
<text x="607.3" y="613.6" font-size="12" fill="#1c0c24" font-weight="normal" font-family='"Liberation Mono", monospace' text-anchor="middle" >l</text>
<text x="618.3" y="613.6" font-size="12" fill="#1c0c24" font-weight="normal" font-family='"Liberation Mono", monospace' text-anchor="middle" >o</text>
<text x="629.3" y="613.6" font-size="12" fill="#1c0c24" font-weight="normal" font-family='"Liberation Mono", monospace' text-anchor="middle" >h</text>
<text x="640.3" y="613.6" font-size="12" fill="#1c0c24" font-weight="normal" font-family='"Liberation Mono", monospace' text-anchor="middle" >a</text>
<text x="651.3" y="613.6" font-size="12" fill="#1c0c24" font-weight="normal" font-family='"Liberation Mono", monospace' text-anchor="middle" >l</text>
<text x="662.3" y="613.6" font-size="12" fill="#1c0c24" font-weight="normal" font-family='"Liberation Mono", monospace' text-anchor="middle" >l</text>
<text x="673.3" y="613.6" font-size="12" fill="#1c0c24" font-weight="normal" font-family='"Liberation Mono", monospace' text-anchor="middle" >o</text>
<text x="684.3" y="613.6" font-size="12" fill="#1c0c24" font-weight="normal" font-family='"Liberation Mono", monospace' text-anchor="middle" >h</text>
<text x="695.3" y="613.6" font-size="12" fill="#1c0c24" font-weight="normal" font-family='"Liberation Mono", monospace' text-anchor="middle" >a</text>
<text x="706.3" y="613.6" font-size="12" fill="#1c0c24" font-weight="normal" font-family='"Liberation Mono", monospace' text-anchor="middle" >l</text>
<text x="717.3" y="613.6" font-size="12" fill="#1c0c24" font-weight="normal" font-family='"Liberation Mono", monospace' text-anchor="middle" >l</text>
<text x="728.3" y="613.6" font-size="12" fill="#1c0c24" font-weight="normal" font-family='"Liberation Mono", monospace' text-anchor="middle" >o</text>
<text x="739.3" y="613.6" font-size="12" fill="#1c0c24" font-weight="normal" font-family='"Liberation Mono", monospace' text-anchor="middle" >h</text>
<text x="750.3" y="613.6" font-size="12" fill="#1c0c24" font-weight="normal" font-family='"Liberation Mono", monospace' text-anchor="middle" >a</text>
<text x="761.3" y="613.6" font-size="12" fill="#1c0c24" font-weight="normal" font-family='"Liberation Mono", monospace' text-anchor="middle" >l</text>
<text x="772.3" y="613.6" font-size="12" fill="#1c0c24" font-weight="normal" font-family='"Liberation Mono", monospace' text-anchor="middle" >l</text>
<text x="783.3" y="613.6" font-size="12" fill="#1c0c24" font-weight="normal" font-family='"Liberation Mono", monospace' text-anchor="middle" >o</text>
<text x="794.3" y="613.6" font-size="12" fill="#1c0c24" font-weight="normal" font-family='"Liberation Mono", monospace' text-anchor="middle" >h</text>
<text x="805.3" y="613.6" font-size="12" fill="#1c0c24" font-weight="normal" font-family='"Liberation Mono", monospace' text-anchor="middle" >a</text>
<text x="816.3" y="613.6" font-size="12" fill="#1c0c24" font-weight="normal" font-family='"Liberation Mono", monospace' text-anchor="middle" >l</text>
<text x="827.3" y="613.6" font-size="12" fill="#1c0c24" font-weight="normal" font-family='"Liberation Mono", monospace' text-anchor="middle" >l</text>
<text x="838.3" y="613.6" font-size="12" fill="#1c0c24" font-weight="normal" font-family='"Liberation Mono", monospace' text-anchor="middle" >o</text>
<text x="849.3" y="613.6" font-size="12" fill="#1c0c24" font-weight="normal" font-family='"Liberation Mono", monospace' text-anchor="middle" >h</text>
<text x="860.3" y="613.6" font-size="12" fill="#1c0c24" font-weight="normal" font-family='"Liberation Mono", monospace' text-anchor="middle" >a</text>
<text x="871.3" y="613.6" font-size="12" fill="#1c0c24" font-weight="normal" font-family='"Liberation Mono", monospace' text-anchor="middle" >l</text>
<text x="882.3" y="613.6" font-size="12" fill="#1c0c24" font-weight="normal" font-family='"Liberation Mono", monospace' text-anchor="middle" >l</text>
<text x="893.3" y="613.6" font-size="12" fill="#1c0c24" font-weight="normal" font-family='"Liberation Mono", monospace' text-anchor="middle" >o</text>
</svg></body></html>
